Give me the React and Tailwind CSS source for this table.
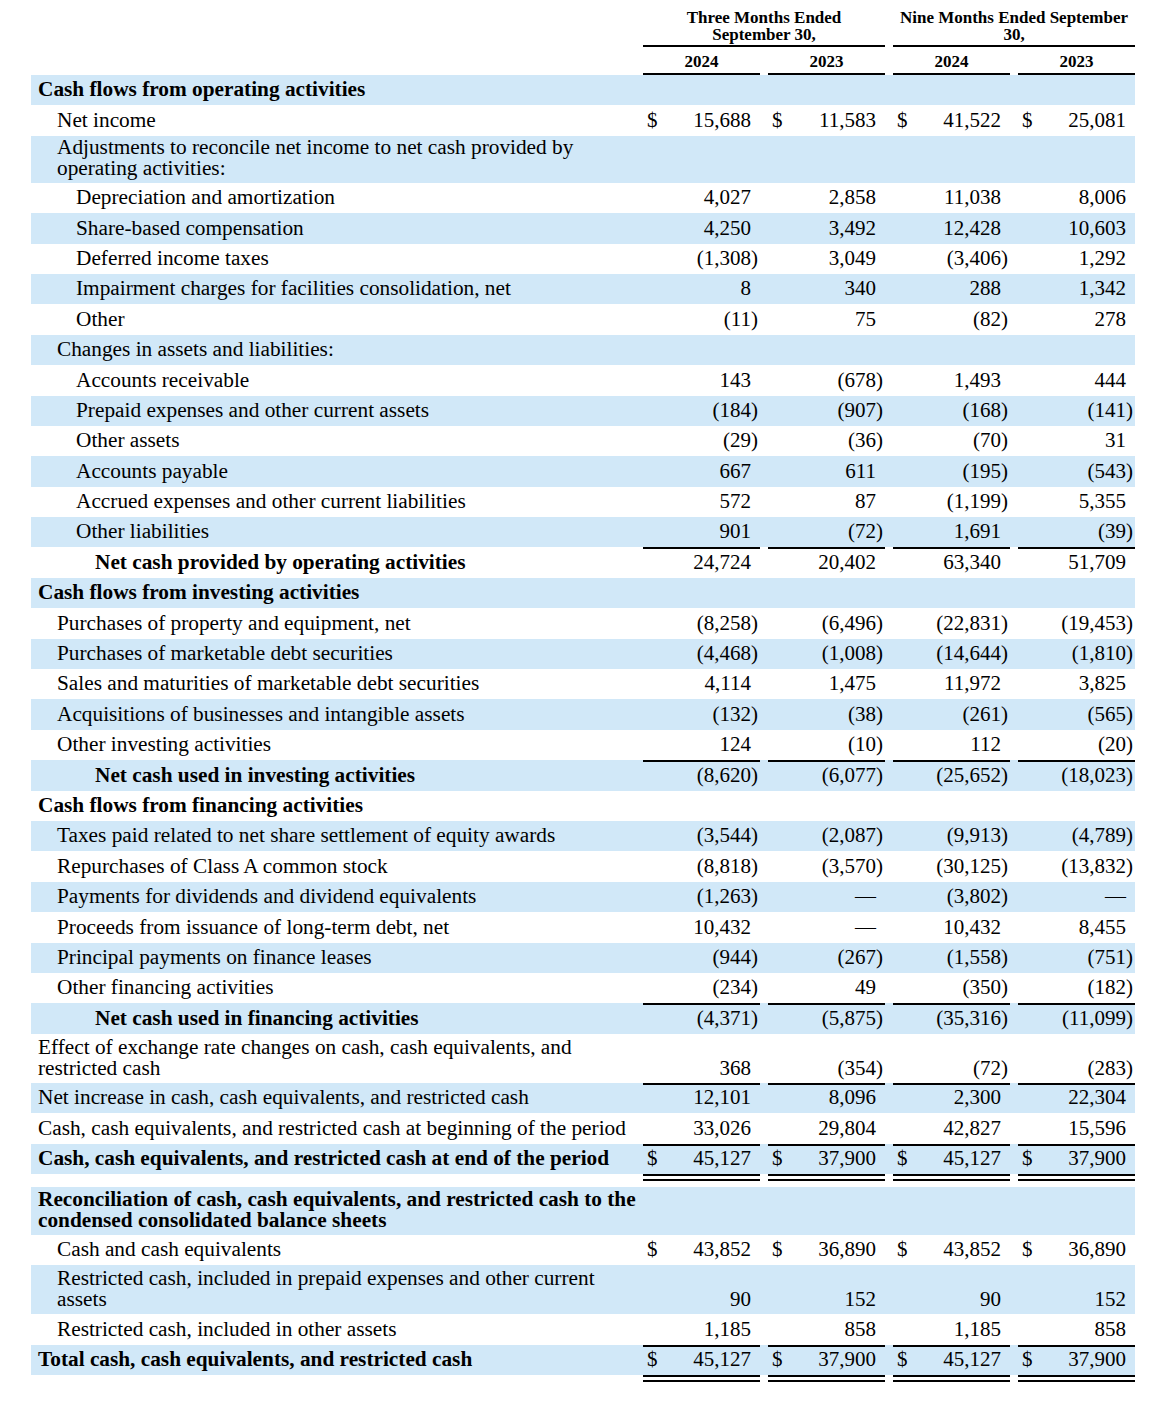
import React from 'react';

const GRID = 'grid grid-cols-[604px_117px_117px_117px_117px] gap-x-[8px]';

const INDENT = ['pl-[7px]', 'pl-[26px]', 'pl-[45px]', 'pl-[64px]'];

const mainRows = [
  { label: 'Cash flows from operating activities', bold: true, indent: 0 },
  { label: 'Net income', indent: 1, dollar: true, vals: ['15,688', '11,583', '41,522', '25,081'] },
  { label: ['Adjustments to reconcile net income to net cash provided by', 'operating activities:'], indent: 1, h: 'h-[47px]' },
  { label: 'Depreciation and amortization', indent: 2, vals: ['4,027', '2,858', '11,038', '8,006'] },
  { label: 'Share-based compensation', indent: 2, vals: ['4,250', '3,492', '12,428', '10,603'] },
  { label: 'Deferred income taxes', indent: 2, vals: ['(1,308)', '3,049', '(3,406)', '1,292'] },
  { label: 'Impairment charges for facilities consolidation, net', indent: 2, vals: ['8', '340', '288', '1,342'] },
  { label: 'Other', indent: 2, vals: ['(11)', '75', '(82)', '278'] },
  { label: 'Changes in assets and liabilities:', indent: 1 },
  { label: 'Accounts receivable', indent: 2, vals: ['143', '(678)', '1,493', '444'] },
  { label: 'Prepaid expenses and other current assets', indent: 2, vals: ['(184)', '(907)', '(168)', '(141)'] },
  { label: 'Other assets', indent: 2, vals: ['(29)', '(36)', '(70)', '31'] },
  { label: 'Accounts payable', indent: 2, vals: ['667', '611', '(195)', '(543)'] },
  { label: 'Accrued expenses and other current liabilities', indent: 2, vals: ['572', '87', '(1,199)', '5,355'] },
  { label: 'Other liabilities', indent: 2, vals: ['901', '(72)', '1,691', '(39)'] },
  { label: 'Net cash provided by operating activities', bold: true, indent: 3, top: true, vals: ['24,724', '20,402', '63,340', '51,709'] },
  { label: 'Cash flows from investing activities', bold: true, indent: 0 },
  { label: 'Purchases of property and equipment, net', indent: 1, vals: ['(8,258)', '(6,496)', '(22,831)', '(19,453)'] },
  { label: 'Purchases of marketable debt securities', indent: 1, vals: ['(4,468)', '(1,008)', '(14,644)', '(1,810)'] },
  { label: 'Sales and maturities of marketable debt securities', indent: 1, vals: ['4,114', '1,475', '11,972', '3,825'] },
  { label: 'Acquisitions of businesses and intangible assets', indent: 1, vals: ['(132)', '(38)', '(261)', '(565)'] },
  { label: 'Other investing activities', indent: 1, vals: ['124', '(10)', '112', '(20)'] },
  { label: 'Net cash used in investing activities', bold: true, indent: 3, top: true, vals: ['(8,620)', '(6,077)', '(25,652)', '(18,023)'] },
  { label: 'Cash flows from financing activities', bold: true, indent: 0 },
  { label: 'Taxes paid related to net share settlement of equity awards', indent: 1, vals: ['(3,544)', '(2,087)', '(9,913)', '(4,789)'] },
  { label: 'Repurchases of Class A common stock', indent: 1, vals: ['(8,818)', '(3,570)', '(30,125)', '(13,832)'] },
  { label: 'Payments for dividends and dividend equivalents', indent: 1, vals: ['(1,263)', '—', '(3,802)', '—'] },
  { label: 'Proceeds from issuance of long-term debt, net', indent: 1, vals: ['10,432', '—', '10,432', '8,455'] },
  { label: 'Principal payments on finance leases', indent: 1, vals: ['(944)', '(267)', '(1,558)', '(751)'] },
  { label: 'Other financing activities', indent: 1, vals: ['(234)', '49', '(350)', '(182)'] },
  { label: 'Net cash used in financing activities', bold: true, indent: 3, top: true, vals: ['(4,371)', '(5,875)', '(35,316)', '(11,099)'] },
  { label: ['Effect of exchange rate changes on cash, cash equivalents, and', 'restricted cash'], indent: 0, h: 'h-[49px]', vals: ['368', '(354)', '(72)', '(283)'] },
  { label: 'Net increase in cash, cash equivalents, and restricted cash', indent: 0, top: true, vals: ['12,101', '8,096', '2,300', '22,304'] },
  { label: 'Cash, cash equivalents, and restricted cash at beginning of the period', indent: 0, vals: ['33,026', '29,804', '42,827', '15,596'] },
  { label: 'Cash, cash equivalents, and restricted cash at end of the period', bold: true, indent: 0, top: true, double: true, dollar: true, vals: ['45,127', '37,900', '45,127', '37,900'] },
];

const reconRows = [
  { label: ['Reconciliation of cash, cash equivalents, and restricted cash to the', 'condensed consolidated balance sheets'], bold: true, indent: 0, h: 'h-[48px]' },
  { label: 'Cash and cash equivalents', indent: 1, dollar: true, vals: ['43,852', '36,890', '43,852', '36,890'] },
  { label: ['Restricted cash, included in prepaid expenses and other current', 'assets'], indent: 1, h: 'h-[49px]', vals: ['90', '152', '90', '152'] },
  { label: 'Restricted cash, included in other assets', indent: 1, vals: ['1,185', '858', '1,185', '858'] },
  { label: 'Total cash, cash equivalents, and restricted cash', bold: true, indent: 0, top: true, double: true, dollar: true, vals: ['45,127', '37,900', '45,127', '37,900'] },
];

function Amount({ value, dollar, top, pb }) {
  const neg = value.endsWith(')');
  const num = neg ? value.slice(0, -1) : value;
  return (
    <div className={`flex items-end pl-[4px] ${pb} ${top ? 'border-t-2 border-black' : ''}`}>
      <span className="w-[12px]">{dollar ? '$' : ''}</span>
      <span className="flex-1 text-right">{num}</span>
      <span className="w-[9px]">{neg ? ')' : ''}</span>
    </div>
  );
}

function Row({ row, blue }) {
  const lines = Array.isArray(row.label) ? row.label : [row.label];
  const tall = lines.length > 1;
  const pb = tall ? 'pb-[4px]' : 'pb-[5px]';
  return (
    <div>
      <div className={`${GRID} ${row.h || 'h-[30.4px]'} ${blue ? 'bg-[#d1e8f8]' : ''}`}>
        <div className={`flex flex-col justify-end text-[21.3px] ${pb} ${INDENT[row.indent]} ${row.bold ? 'font-bold' : ''}`}>
          {lines.map(l => (
            <span key={l} className="whitespace-nowrap">{l}</span>
          ))}
        </div>
        {row.vals
          ? row.vals.map((v, i) => <Amount key={i} value={v} dollar={row.dollar} top={row.top} pb={pb} />)
          : null}
      </div>
      {row.double && (
        <div className={GRID}>
          <div />
          {[0, 1, 2, 3].map(i => (
            <div key={i} className="h-[7px] border-y-2 border-black" />
          ))}
        </div>
      )}
    </div>
  );
}

export default function App() {
  return (
    <div className="w-[1172px] min-h-[1401px] bg-white text-black font-['Liberation_Serif','Times_New_Roman',serif] text-[21px] leading-[21px]">
      <div className="ml-[31px] w-[1104px]">
        {/* HEADER */}
        <div className={`${GRID} text-[17px] leading-[17px] font-bold`}>
          <div />
          <div className="col-span-2 text-center pt-[9px] pb-[2px] border-b-2 border-black">
            <div>Three Months Ended</div>
            <div>September 30,</div>
          </div>
          <div className="col-span-2 text-center pt-[9px] pb-[2px] border-b-2 border-black">
            <div>Nine Months Ended September</div>
            <div>30,</div>
          </div>
        </div>
        <div className={`${GRID} text-[17px] leading-[17px] font-bold`}>
          <div />
          {['2024', '2023', '2024', '2023'].map((y, i) => (
            <div key={i} className="text-center pt-[6px] pb-[3px] border-b-2 border-black">{y}</div>
          ))}
        </div>

        {/* CASH FLOWS */}
        {mainRows.map((r, i) => (
          <Row key={i} row={r} blue={i % 2 === 0} />
        ))}

        {/* RECONCILIATION */}
        <div className="mt-[6px]">
          {reconRows.map((r, i) => (
            <Row key={i} row={r} blue={i % 2 === 0} />
          ))}
        </div>
      </div>
    </div>
  );
}
